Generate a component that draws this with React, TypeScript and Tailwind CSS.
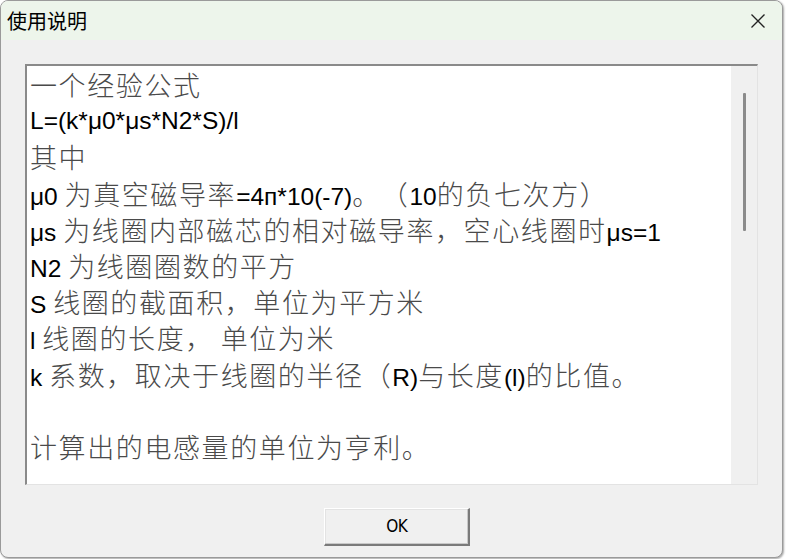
import React from "react";

//---------------------------------Data---------------------------------
const lines: string[] = [
  "一个经验公式",
  "L=(k*μ0*μs*N2*S)/l",
  "其中",
  "μ0 为真空磁导率=4п*10(-7)。（10的负七次方）",
  "μs 为线圈内部磁芯的相对磁导率，空心线圈时μs=1",
  "N2 为线圈圈数的平方",
  "S 线圈的截面积，单位为平方米",
  "l 线圈的长度， 单位为米",
  "k 系数，取决于线圈的半径（R)与长度(l)的比值。",
  "",
  "计算出的电感量的单位为亨利。",
];

const latin = /([\u0020-\u007E\u00B5\u03BC\u03C0\u043F]+)/;

//---------------------------------Helpers---------------------------------
const Line: React.FC<{ text: string }> = ({ text }) => {
  const parts = text.split(latin).filter((p) => p !== "");
  return (
    <div className="h-[36.2px] leading-[36.2px] whitespace-nowrap [text-spacing-trim:space-all]">
      {parts.map((p, i) =>
        latin.test(p) ? (
          <span
            key={i}
            className="text-[24.5px] text-black font-['Liberation_Sans',Arial,sans-serif] whitespace-pre"
          >
            {p}
          </span>
        ) : (
          <span
            key={i}
            className="text-[27px] tracking-[1.6px] text-[#4a4a4a] font-['Noto_Sans_CJK_SC',sans-serif] font-light"
          >
            {p}
          </span>
        )
      )}
    </div>
  );
};

//---------------------------------UI---------------------------------
export default function App() {
  return (
    <div className="w-[786px] h-[559px] bg-white">
      <div className="w-[783px] h-[558px] rounded-[8px] border border-[#9a9a9a] bg-[#f0f0f0] overflow-hidden flex flex-col shadow-[1px_1px_2px_rgba(0,0,0,0.35)]">
        {/* title bar */}
        <div className="h-[39px] shrink-0 bg-[#edf5eb] flex items-center justify-between pl-[6px] pr-[16px]">
          <span className="text-[20px] text-black font-['Noto_Sans_CJK_SC',sans-serif] leading-none">
            使用说明
          </span>
          <svg width="16" height="16" viewBox="0 0 16 16" className="mt-[1px]">
            <path d="M1.5 1.5 L14.5 14.5 M14.5 1.5 L1.5 14.5" stroke="#222" strokeWidth="1.3" fill="none" />
          </svg>
        </div>

        {/* body */}
        <div className="flex-1 flex flex-col items-start pt-[24px] pl-[24px]">
          <div className="w-[733px] h-[421px] flex border-t-[2px] border-l-[2px] border-t-[#8a8a8a] border-l-[#8a8a8a] border-r border-b border-r-[#e3e3e3] border-b-[#e3e3e3]">
            <div className="flex-1 bg-white pl-[3px] pt-[1px] overflow-hidden">
              {lines.map((l, i) => (
                <Line key={i} text={l} />
              ))}
            </div>
            <div className="w-[26px] bg-[#f0f0f0] flex justify-center pt-[27px]">
              <div className="w-[3px] h-[138px] bg-[#8b8b8b] rounded-[1px]" />
            </div>
          </div>

          <button className="mt-[23px] ml-[299px] w-[146px] h-[38px] bg-[#f0f0f0] border-t border-l border-t-white border-l-white border-r-[2px] border-b-[2px] border-r-[#7a7a7a] border-b-[#7a7a7a] shadow-[inset_-1px_-1px_0_#c8c8c8,inset_1px_1px_0_#e3e3e3] flex items-center justify-center">
            <span className="text-[17px] text-black font-['DejaVu_Sans',sans-serif] tracking-[-0.5px] scale-x-[0.9]">
              OK
            </span>
          </button>
        </div>
      </div>
    </div>
  );
}
